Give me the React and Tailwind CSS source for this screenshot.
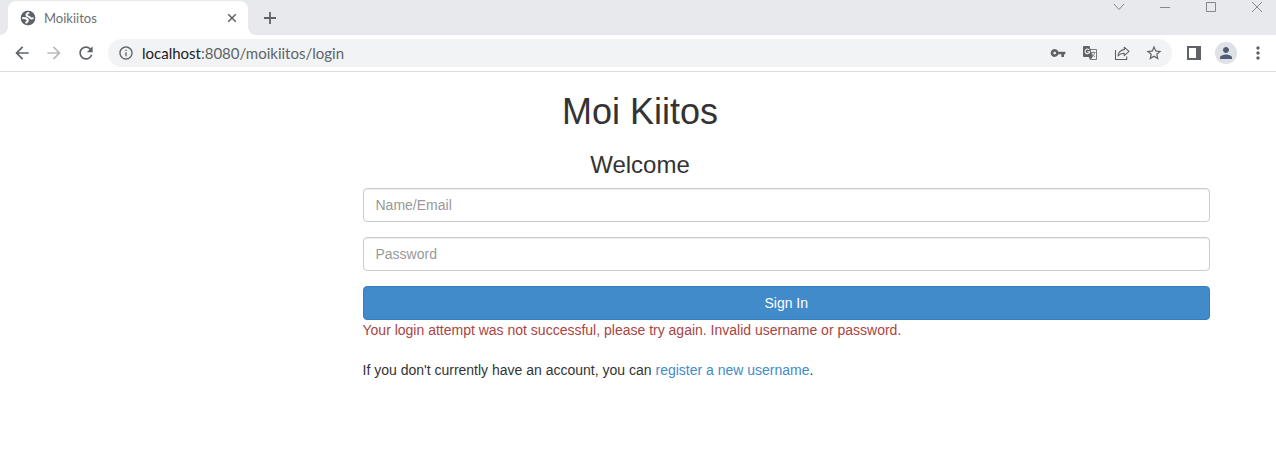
import React from "react";
import {
  MdArrowBack,
  MdArrowForward,
  MdRefresh,
  MdInfoOutline,
  MdVpnKey,
  MdStarBorder,
  MdPerson,
  MdMoreVert,
} from "react-icons/md";

function GlobeIcon() {
  return (
    <svg width="16" height="16" viewBox="0 0 16 16" fill="none">
      <circle cx="8" cy="8" r="7.2" fill="#5f6368" />
      <path
        d="M9.300 2.300C7.600 3 6.200 4 6.500 5.200c.3 1.200 1.500 1 2.500 1.500 1 .4.800 1.500 1.800 1.700 1 .2 1.700-.3 2.800-.2"
        stroke="#fff"
        strokeWidth="1.9"
      />
      <path
        d="M2 8.200c1.300-.3 3.200-.2 4.400.3 1.200.6 1.600 1.300 1.400 2.200-.2.900-1.600.9-1.700 2.900"
        stroke="#fff"
        strokeWidth="2.200"
      />
      <circle cx="8" cy="8" r="6.600" stroke="#5f6368" strokeWidth="1.300" />
    </svg>
  );
}

function TranslateIcon() {
  return (
    <svg width="16" height="16" viewBox="0 0 16 16" fill="none">
      <path d="M8 4.500h6.500v10H8.200L7 11.500" stroke="#77797d" />
      <path d="M9.300 7.500h4.200M11.400 6.500v1M12.800 7.500c-.4 1.700-1.400 3-3 4M10 8.500c.6 1.500 1.500 2.400 3 3.200" stroke="#77797d" strokeWidth=".9" />
      <path d="M2 1h5.500l3.200 11H2a1 1 0 0 1-1-1V2a1 1 0 0 1 1-1z" fill="#5f6368" />
      <path d="M7.200 4.900A2.300 2.300 0 1 0 7.700 6.700H5.500" stroke="#f1f3f4" strokeWidth="1.100" />
      <path d="M7.500 12h3.200l-2.300 2.600z" fill="#5f6368" />
    </svg>
  );
}

function WindowControls() {
  const button = "flex h-[14px] w-[46px] items-center justify-center";
  return (
    <div className="-mr-1 flex self-start text-[#85878b]">
      <button type="button" aria-label="Search tabs" className={button}>
        <svg width="12" height="12" viewBox="0 0 12 12" fill="none" stroke="currentColor">
          <path d="M1 3l5 5.5L11 3" />
        </svg>
      </button>
      <button type="button" aria-label="Minimize" className={button}>
        <svg width="10" height="12" viewBox="0 0 10 12" fill="none" stroke="currentColor">
          <path d="M0 6.5h10" />
        </svg>
      </button>
      <button type="button" aria-label="Maximize" className={button}>
        <svg width="10" height="10" viewBox="0 0 10 10" fill="none" stroke="currentColor">
          <path d="M.5.5h9v9h-9z" />
        </svg>
      </button>
      <button type="button" aria-label="Close window" className={button}>
        <svg width="10" height="10" viewBox="0 0 10 10" fill="none" stroke="currentColor">
          <path d="M0 0l10 10M10 0L0 10" />
        </svg>
      </button>
    </div>
  );
}

function TabStrip() {
  return (
    <div className="flex h-[35px] items-end overflow-hidden bg-[#e8e9ed]">
      <svg width="8" height="8" viewBox="0 0 8 8" fill="#fff">
        <path d="M8 0v8H0a8 8 0 0 0 8-8z" />
      </svg>
      <div className="flex h-[34px] w-60 items-center rounded-t-lg bg-white pr-2.5 pl-3">
        <GlobeIcon />
        <span className="ml-2 flex-1 pt-px font-['Lato',sans-serif] text-[13px] text-[#6b6f74]">Moikiitos</span>
        <button type="button" aria-label="Close tab" className="flex size-3 items-center justify-center text-[#5f6368]">
          <svg width="10" height="10" viewBox="0 0 10 10" fill="none" stroke="currentColor" strokeWidth="1.5">
            <path d="M1.200 1.200l7.600 7.600M8.800 1.200L1.200 8.800" />
          </svg>
        </button>
      </div>
      <svg width="8" height="8" viewBox="0 0 8 8" fill="#fff">
        <path d="M0 0v8h8a8 8 0 0 1-8-8z" />
      </svg>
      <button type="button" aria-label="New tab" className="ml-2 flex h-[34px] w-3 items-center justify-center text-[#5f6368]">
        <svg width="12" height="12" viewBox="0 0 12 12" fill="none" stroke="currentColor" strokeWidth="1.800">
          <path d="M6 0v12M0 6h12" />
        </svg>
      </button>
      <div className="flex-1" />
      <WindowControls />
    </div>
  );
}

function Toolbar() {
  return (
    <div className="flex h-[37px] items-center border-b border-[#dcdde0] bg-white pr-2 pl-3 text-[#5f6368]">
      <div className="flex gap-3">
        <button type="button" aria-label="Back"><MdArrowBack className="size-5" /></button>
        <button type="button" aria-label="Forward" className="text-[#bababc]"><MdArrowForward className="size-5" /></button>
        <button type="button" aria-label="Reload"><MdRefresh className="size-5" /></button>
      </div>
      <div className="ml-3 flex h-7 flex-1 items-center rounded-full bg-[#f1f3f4] pr-[9px] pl-2.5">
        <MdInfoOutline className="size-4" />
        <div className="ml-2 flex-1 font-['Lato',sans-serif] text-[15px]">
          <span className="text-[#202124]">localhost</span>:8080/moikiitos/login
        </div>
        <div className="flex items-center gap-4">
          <button type="button" aria-label="Manage passwords"><MdVpnKey className="size-4" /></button>
          <button type="button" aria-label="Translate this page"><TranslateIcon /></button>
          <button type="button" aria-label="Share this page">
            <svg width="16" height="16" viewBox="0 0 16 16" fill="none" stroke="currentColor" strokeWidth="1.1">
              <path d="M1.5 5v9.500h11.200v-3" />
              <path d="M10.200 2.200l4.800 4.200-4.800 4.200V8.300C7.600 8.200 5.600 9 4 11c.3-3.500 2.500-5.900 6.200-6.400z" strokeLinejoin="round" />
            </svg>
          </button>
          <button type="button" aria-label="Bookmark this tab" className="-ml-px"><MdStarBorder className="size-[18px]" /></button>
        </div>
      </div>
      <button type="button" aria-label="Side panel" className="ml-[15px]">
        <svg width="14" height="14" viewBox="0 0 14 14" fill="currentColor">
          <path fillRule="evenodd" d="M0 0h14v14H0zM2 2v10h7V2z" />
        </svg>
      </button>
      <button type="button" aria-label="Profile" className="ml-3.5 flex size-[22px] items-center justify-center rounded-full bg-[#dee1e6] text-[#4f5d73]">
        <MdPerson className="size-[18px]" />
      </button>
      <button type="button" aria-label="Browser menu" className="ml-[11px]"><MdMoreVert className="size-5" /></button>
    </div>
  );
}

function Field({ id, label, type }) {
  return (
    <div className="mb-[15px]">
      <input
        id={id}
        name={id}
        type={type}
        aria-label={label}
        placeholder={label}
        className="block h-[34px] w-full rounded-sm border border-[#ccc] bg-white px-3 py-1.5 text-sm text-[#555] shadow-[inset_0_1px_1px_rgba(0,0,0,0.075)] placeholder:text-[#999]"
      />
    </div>
  );
}

function LoginPage() {
  return (
    <main className="w-full pl-1 text-sm leading-5 text-[#333]">
      <div className="mx-auto max-w-[1170px] px-[15px]">
        <div className="text-center">
          <h1 className="mt-5 text-[36px] leading-10 font-medium">Moi Kiitos</h1>
          <h3 className="mt-5 mb-2.5 text-2xl leading-[26px] font-medium">Welcome</h3>
        </div>
        <form className="-mx-[15px] grid grid-cols-4" onSubmit={(event) => event.preventDefault()}>
          <div className="col-span-3 col-start-2 px-[15px]">
            <Field id="username" label="Name/Email" type="text" />
            <Field id="password" label="Password" type="password" />
            <button type="submit" className="block h-[34px] w-full rounded-sm border border-[#357ebd] bg-[#428bca] text-center text-white">
              Sign In
            </button>
            <p className="text-[#a94442]">
              Your login attempt was not successful, please try again. Invalid username or password.
            </p>
            <p className="mt-5">
              If you don't currently have an account, you can{" "}
              <a href="#register" className="text-[#428bca]">register a new username</a>.
            </p>
          </div>
        </form>
      </div>
    </main>
  );
}

export default function App() {
  return (
    <div className="min-h-screen bg-white font-['Liberation_Sans',Arial,sans-serif]">
      <header>
        <TabStrip />
        <Toolbar />
      </header>
      <LoginPage />
    </div>
  );
}
